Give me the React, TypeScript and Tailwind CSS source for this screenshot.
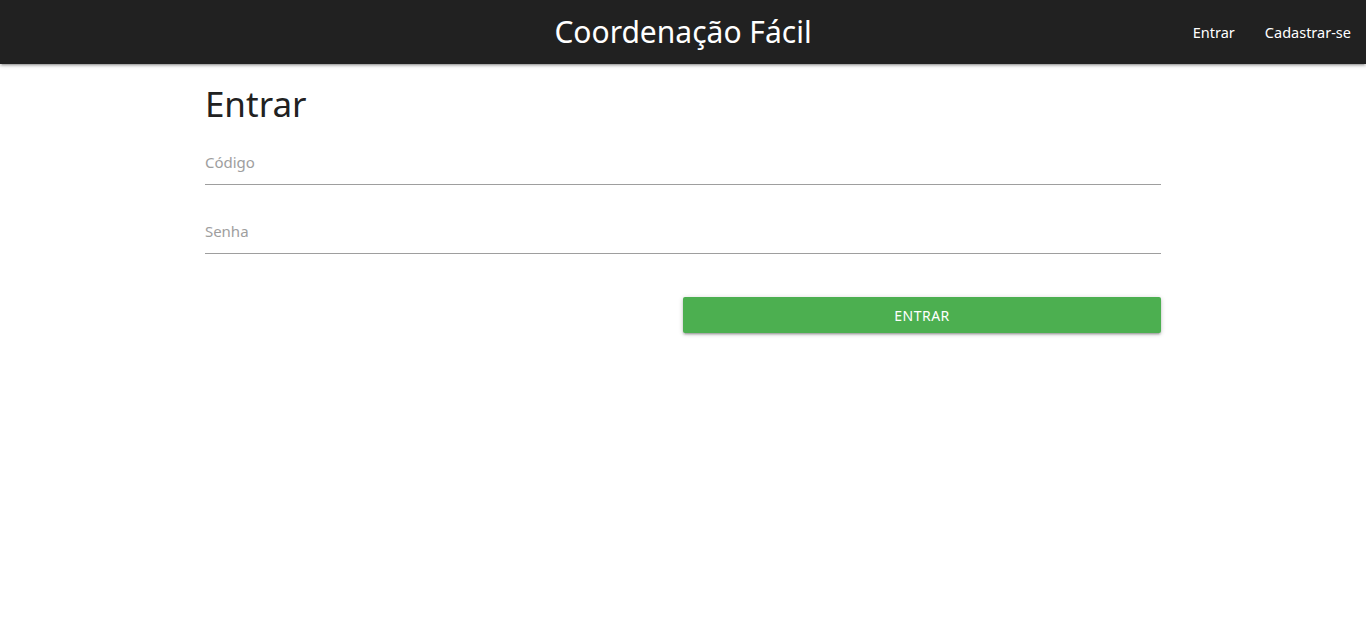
import React from "react";

export default function App() {
  return (
    <div className="min-h-screen bg-white" style={{ fontFamily: '"Noto Sans", "Open Sans", sans-serif' }}>
      <nav className="relative z-10 h-16 bg-[#212121] text-white shadow-[0_2px_2px_0_rgba(0,0,0,0.14),0_3px_1px_-2px_rgba(0,0,0,0.12),0_1px_5px_0_rgba(0,0,0,0.2)] grid grid-cols-[1fr_auto_1fr] items-center">
        <div />
        <a className="text-[30px] leading-[64px] whitespace-nowrap" href="#">Coordenação Fácil</a>
        <ul className="flex justify-end h-full">
          <li><a href="#" className="block px-[15px] leading-[64px] text-[14.5px]">Entrar</a></li>
          <li><a href="#" className="block px-[15px] leading-[64px] text-[14.5px]">Cadastrar-se</a></li>
        </ul>
      </nav>
      <main className="w-[70%] mx-auto pt-5">
        <h1 className="text-[35px] leading-[40px] text-[#212121]">Entrar</h1>
        <form className="mt-3 flex flex-col gap-5">
          <div className="h-[49px] border-b border-[#9e9e9e] flex items-center pt-1">
            <span className="text-[15px] text-[#9e9e9e]">Código</span>
          </div>
          <div className="h-[49px] border-b border-[#9e9e9e] flex items-center pt-1">
            <span className="text-[15px] text-[#9e9e9e]">Senha</span>
          </div>
        </form>
        <div className="grid grid-cols-2 mt-[43px]">
          <div />
          <button className="h-9 rounded-[2px] bg-[#4caf50] text-white text-[14px] uppercase tracking-[0.5px] shadow-[0_2px_2px_0_rgba(0,0,0,0.14),0_3px_1px_-2px_rgba(0,0,0,0.12),0_1px_5px_0_rgba(0,0,0,0.2)]">
            Entrar
          </button>
        </div>
      </main>
    </div>
  );
}
